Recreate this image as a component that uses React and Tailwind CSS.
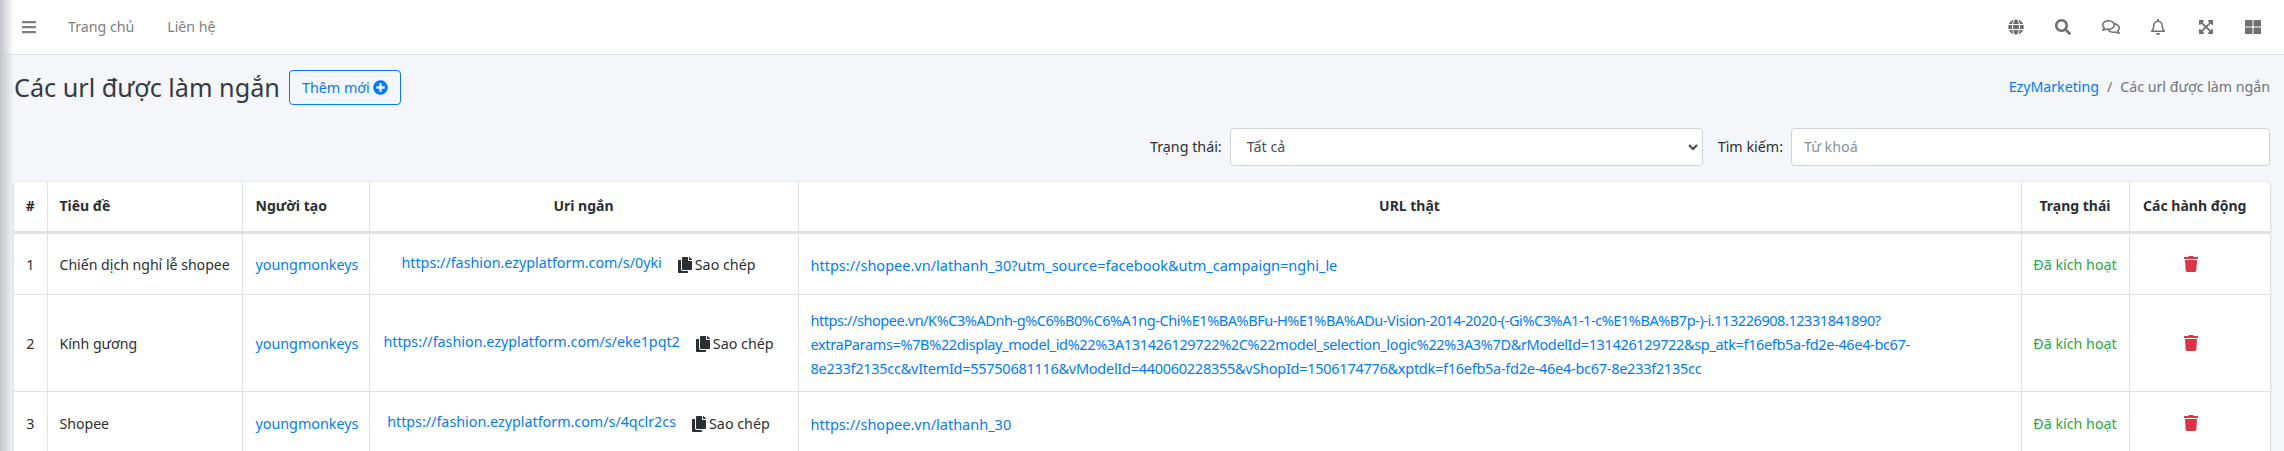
import React from 'react';
import {
  FaBars, FaGlobe, FaSearch, FaRegComments, FaRegBell, FaExpandArrowsAlt, FaThLarge,
  FaPlusCircle, FaCopy, FaTrash,
} from 'react-icons/fa';

const rows = [
  {
    id: 1,
    title: 'Chiến dịch nghỉ lễ shopee',
    short: 'https://fashion.ezyplatform.com/s/0yki',
    url: [{ text: 'https://shopee.vn/lathanh_30?utm_source=facebook&utm_campaign=nghi_le', cls: '' }],
    height: 'h-[62px]',
  },
  {
    id: 2,
    title: 'Kính gương',
    short: 'https://fashion.ezyplatform.com/s/eke1pqt2',
    url: [
      { text: 'https://shopee.vn/K%C3%ADnh-g%C6%B0%C6%A1ng-Chi%E1%BA%BFu-H%E1%BA%ADu-Vision-2014-2020-(-Gi%C3%A1-1-c%E1%BA%B7p-)-i.113226908.12331841890?', cls: 'tracking-[-0.44px]' },
      { text: 'extraParams=%7B%22display_model_id%22%3A131426129722%2C%22model_selection_logic%22%3A3%7D&rModelId=131426129722&sp_atk=f16efb5a-fd2e-46e4-bc67-', cls: 'tracking-[-0.35px]' },
      { text: '8e233f2135cc&vItemId=55750681116&vModelId=440060228355&vShopId=1506174776&xptdk=f16efb5a-fd2e-46e4-bc67-8e233f2135cc', cls: 'tracking-[-0.27px]' },
    ],
    height: 'h-[97px]',
  },
  {
    id: 3,
    title: 'Shopee',
    short: 'https://fashion.ezyplatform.com/s/4qclr2cs',
    url: [{ text: 'https://shopee.vn/lathanh_30', cls: '' }],
    height: 'h-[64px]',
  },
];

const navIcons = [
  { icon: FaGlobe, cls: 'w-[16px] h-[16px]' },
  { icon: FaSearch, cls: 'w-[16px] h-[16px]' },
  { icon: FaRegComments, cls: 'w-[18px] h-[18px]' },
  { icon: FaRegBell, cls: 'w-[16px] h-[16px]' },
  { icon: FaExpandArrowsAlt, cls: 'w-[16px] h-[16px]' },
  { icon: FaThLarge, cls: 'w-[16px] h-[16px]' },
];

export default function App() {
  return (
    <div className="relative h-[451px] overflow-hidden bg-[#f4f6f9] font-['Noto_Sans',sans-serif] text-[14.3px] leading-[24px] text-[#2b2f33]">
      {/* sidebar shadow along the left edge */}
      <div className="absolute left-0 top-0 bottom-0 w-[14px] bg-gradient-to-r from-[#c4c4c8] to-transparent z-10" />

      {/* Navbar */}
      <nav className="h-[55px] bg-white border-b border-[#dee2e6] flex items-center justify-between pl-[22px] pr-[23px]">
        <div className="flex items-center text-[#7f7f7f]">
          <FaBars className="w-[14px] h-[16px]" />
          <span className="ml-[32px] text-[14.2px]">Trang chủ</span>
          <span className="ml-[33px] text-[14.2px]">Liên hệ</span>
        </div>
        <div className="flex items-center gap-[31.5px] text-[#6f6f6f]">
          {navIcons.map((n, i) => {
            const Icon = n.icon;
            return (
              <div key={i} className="w-[16px] flex justify-center">
                <Icon className={`${n.cls} shrink-0`} />
              </div>
            );
          })}
        </div>
      </nav>

      <div className="px-[14px]">
        {/* Page header */}
        <div className="flex items-start justify-between pt-[15px]">
          <div className="flex items-center">
            <h1 className="text-[25.2px] leading-[35px] text-[#343a40]">Các url được làm ngắn</h1>
            <button className="ml-[9px] h-[35px] w-[112px] flex items-center justify-center gap-[3px] rounded border border-[#007bff] text-[#007bff]">
              Thêm mới
              <FaPlusCircle className="w-[15px] h-[15px]" />
            </button>
          </div>
          <div className="flex items-center pt-[5px] text-[14.2px]">
            <span className="text-[#007bff]">EzyMarketing</span>
            <span className="mx-[8px] text-[#6c757d]">/</span>
            <span className="text-[#6c757d]">Các url được làm ngắn</span>
          </div>
        </div>

        {/* Filters */}
        <div className="flex items-center justify-end mt-[23px] h-[38px]">
          <label className="mr-[8px]">Trạng thái:</label>
          <div className="w-[473px] h-[38px] bg-white border border-[#ced4da] rounded flex items-center justify-between pl-[16px] pr-[4px] text-[#495057]">
            <span>Tất cả</span>
            <svg width="10" height="7" viewBox="0 0 10 7" fill="none" stroke="#444" strokeWidth="2">
              <path d="M1 1l4 4 4-4" />
            </svg>
          </div>
          <label className="ml-[15px] mr-[8px]">Tìm kiếm:</label>
          <div className="w-[479px] h-[38px] bg-white border border-[#ced4da] rounded flex items-center pl-[12px] text-[#8a9299]">
            Từ khoá
          </div>
        </div>

        {/* Table card */}
        <div className="mt-[16px] bg-white rounded-t shadow-[0_0_1px_rgba(0,0,0,0.125),0_1px_3px_rgba(0,0,0,0.2)]">
          <table className="w-full table-fixed border-collapse">
            <colgroup>
              <col className="w-[33px]" />
              <col className="w-[195px]" />
              <col className="w-[127px]" />
              <col className="w-[429px]" />
              <col />
              <col className="w-[108px]" />
              <col className="w-[141px]" />
            </colgroup>
            <thead>
              <tr className="h-[50px] border-b-[3px] border-[#dee2e6] font-bold text-[14px]">
                <th className="text-center">#</th>
                <th className="border-l border-[#dee2e6] text-left pl-[12px]">Tiêu đề</th>
                <th className="border-l border-[#dee2e6] text-left pl-[13px]">Người tạo</th>
                <th className="border-l border-[#dee2e6] text-center">Uri ngắn</th>
                <th className="border-l border-[#dee2e6] text-center">URL thật</th>
                <th className="border-l border-[#dee2e6] text-center">Trạng thái</th>
                <th className="border-l border-[#dee2e6] text-center pr-[10px]">Các hành động</th>
              </tr>
            </thead>
            <tbody>
              {rows.map((row) => (
                <tr key={row.id} className={`${row.height} border-b border-[#dee2e6]`}>
                  <td className="text-center pt-[2px]">{row.id}</td>
                  <td className="border-l border-[#dee2e6] pl-[12px] pt-[2px] whitespace-nowrap text-[14.1px]">{row.title}</td>
                  <td className="border-l border-[#dee2e6] pl-[13px] pt-[2px] text-[#007bff]">youngmonkeys</td>
                  <td className="border-l border-[#dee2e6] pr-[10px] pt-[2px]">
                    <div className="flex items-center justify-center whitespace-nowrap">
                      <span className="text-[#007bff] -translate-y-[2px]">{row.short}</span>
                      <FaCopy className="ml-[16px] mr-[3px] w-[14px] h-[16px]" />
                      <span>Sao chép</span>
                    </div>
                  </td>
                  <td className="border-l border-[#dee2e6] pl-[12px] pt-[2px] text-[14.5px] text-[#007bff] whitespace-nowrap">
                    {row.url.map((line) => (
                      <div key={line.text} className={line.cls}>{line.text}</div>
                    ))}
                  </td>
                  <td className="border-l border-[#dee2e6] pt-[2px] text-center text-[#28a745]">Đã kích hoạt</td>
                  <td className="border-l border-[#dee2e6] pr-[18px]">
                    <FaTrash className="mx-auto w-[14px] h-[16px] text-[#dc3545]" />
                  </td>
                </tr>
              ))}
            </tbody>
          </table>
        </div>
      </div>
    </div>
  );
}
